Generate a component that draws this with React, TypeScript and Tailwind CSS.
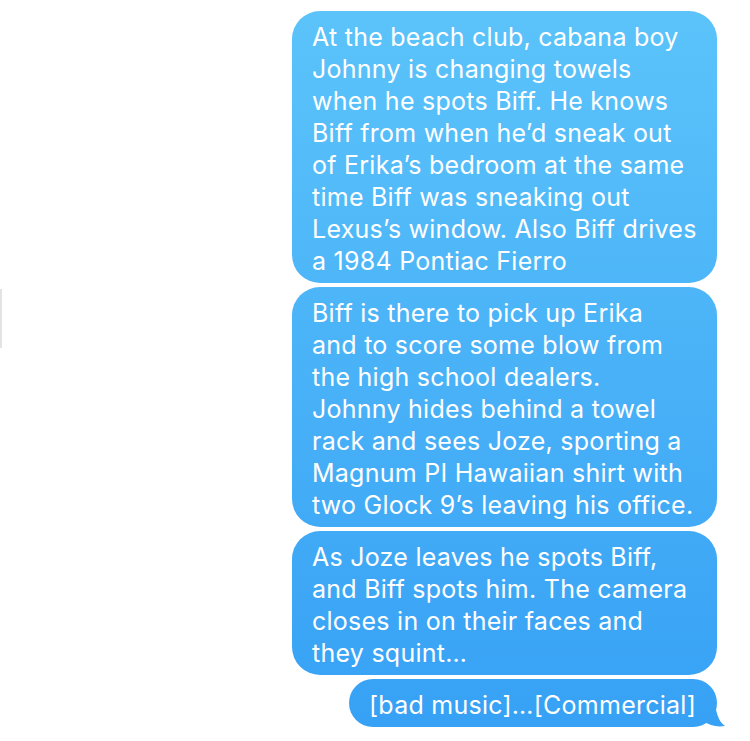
const bubbles: { lines: string[] }[] = [
  {
    lines: [
      "At the beach club, cabana boy",
      "Johnny is changing towels",
      "when he spots Biff. He knows",
      "Biff from when he’d sneak out",
      "of Erika’s bedroom at the same",
      "time Biff was sneaking out",
      "Lexus’s window. Also Biff drives",
      "a 1984 Pontiac Fierro",
    ],
  },
  {
    lines: [
      "Biff is there to pick up Erika",
      "and to score some blow from",
      "the high school dealers.",
      "Johnny hides behind a towel",
      "rack and sees Joze, sporting a",
      "Magnum PI Hawaiian shirt with",
      "two Glock 9’s leaving his office.",
    ],
  },
  {
    lines: [
      "As Joze leaves he spots Biff,",
      "and Biff spots him. The camera",
      "closes in on their faces and",
      "they squint…",
    ],
  },
];

export default function App() {
  return (
    <div className="relative h-[741px] w-[750px] overflow-hidden bg-white font-['Inter',sans-serif]">
      <div className="absolute left-0 top-[289px] h-[59px] w-[2px] bg-[#e3e3e3]" />

      <div className="flex flex-col items-end gap-1 pr-[33px] pt-[11px]">
        {bubbles.map((b, i) => (
          <div
            key={i}
            className="w-[425px] rounded-[28px] bg-[linear-gradient(to_bottom,#5cc4fa,#36a0f5)] bg-fixed px-5 pb-[6px] pt-[10px] text-[25px] leading-[32px] tracking-[0.01em] text-white"
          >
            {b.lines.map((l, j) => (
              <div key={j} className="whitespace-nowrap">
                {l}
              </div>
            ))}
          </div>
        ))}

        <div className="relative">
          <div className="relative z-10 whitespace-nowrap rounded-[24px] bg-[linear-gradient(to_bottom,#5cc4fa,#36a0f5)] bg-fixed pb-[6px] pl-5 pr-[21px] pt-[10px] text-[25px] leading-[32px] tracking-[0.01em] text-white">
            [bad music]…[Commercial]
          </div>
          <svg
            className="absolute bottom-0 right-[-8px] z-0"
            width="30"
            height="30"
            viewBox="0 0 30 30"
          >
            <path
              d="M4 0 L20 0 Q20 22 30 29 Q18 31 8 24 Z"
              fill="#37a1f5"
            />
          </svg>
        </div>
      </div>
    </div>
  );
}
